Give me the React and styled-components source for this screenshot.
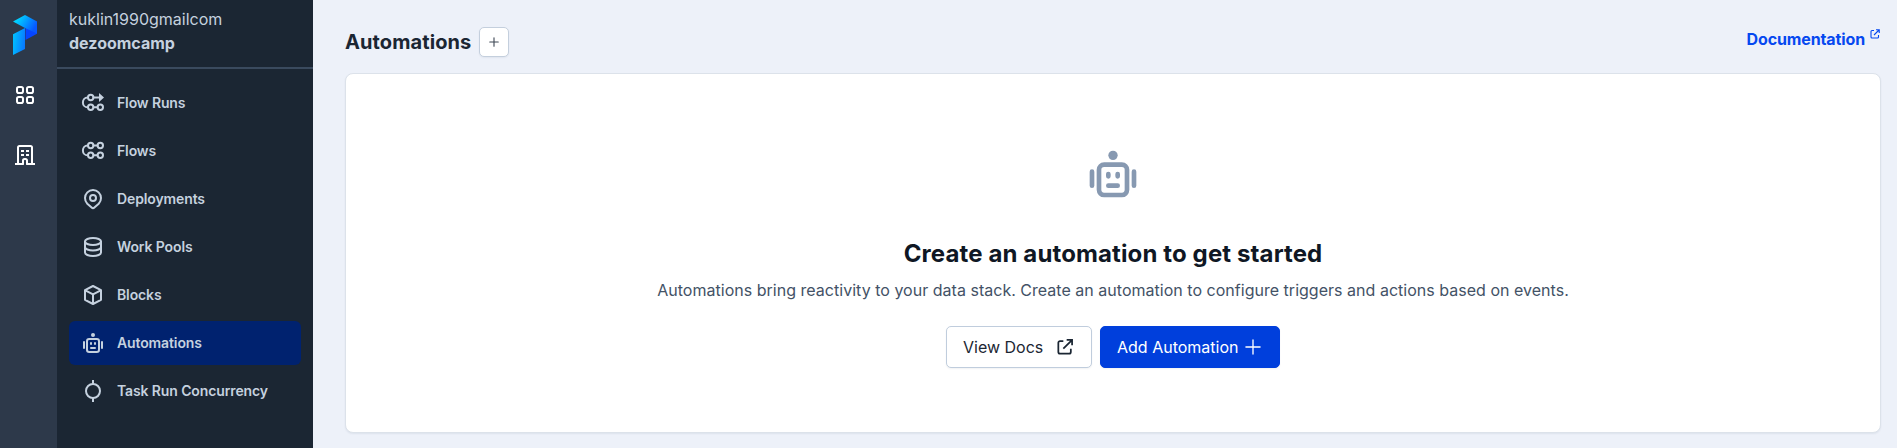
import React from 'react';
import styled, { createGlobalStyle } from 'styled-components';

const GlobalStyle = createGlobalStyle`
  *, *::before, *::after { box-sizing: border-box; }
  body { margin: 0; font-family: Inter, "Liberation Sans", sans-serif; background: #edf1f9; }
  a { color: inherit; text-decoration: none; }
  button { font: inherit; cursor: pointer; }
`;

const Page = styled.div`
  display: flex;
  height: 448px;
  overflow: hidden;
`;

const Rail = styled.aside`
  width: 57px;
  flex: none;
  padding: 15px 0 0 13px;
  background: #2d394a;
  color: #fff;
  display: flex;
  flex-direction: column;
`;

const RailLink = styled.a`
  display: block;
  height: 24px;
  margin-top: ${(p) => p.$gap}px;
`;

const Sidebar = styled.aside`
  width: 256px;
  flex: none;
  background: #1b2633;
  color: #c5d1df;
`;

const Account = styled.header`
  height: 69px;
  padding: 7px 12px 0;
  border-bottom: 2px solid #3a4a5e;
  font-size: 16px;
  line-height: 24px;
`;

const Handle = styled.div`
  font-weight: ${(p) => (p.$strong ? 700 : 400)};
`;

const Nav = styled.nav`
  display: flex;
  flex-direction: column;
  gap: 4px;
  padding: 12px;
`;

const NavItem = styled.a`
  display: flex;
  align-items: center;
  gap: 12px;
  height: 44px;
  padding: 0 12px;
  border-radius: 6px;
  background: ${(p) => (p.$active ? '#00226f' : 'transparent')};
  font-size: 14px;
  font-weight: 600;
  letter-spacing: -0.12px;
`;

const NavLabel = styled.span`
  padding-bottom: 2px;
`;

const Main = styled.main`
  flex: 1;
  min-width: 0;
  padding: 27px 16px 0 32px;
  display: flex;
  flex-direction: column;
`;

const TopBar = styled.header`
  display: flex;
  align-items: flex-start;
  justify-content: space-between;
  height: 46px;
`;

const TitleGroup = styled.div`
  display: flex;
  align-items: center;
  gap: 8px;
`;

const Title = styled.h1`
  margin: 0;
  color: #1b2633;
  font-size: 20px;
  line-height: 28px;
  font-weight: 700;
  letter-spacing: 0.1px;
`;

const AddButton = styled.button`
  width: 30px;
  height: 30px;
  padding: 0;
  display: grid;
  place-items: center;
  border: 1px solid #c4cfdd;
  border-radius: 5px;
  background: #fff;
  color: #3c4653;
  box-shadow: 0 1px 2px rgba(20, 40, 70, 0.06);
`;

const DocLink = styled.a`
  display: flex;
  align-items: flex-start;
  gap: 4px;
  color: #0548f0;
  font-size: 16px;
  line-height: 24px;
  font-weight: 700;
  letter-spacing: -0.12px;
  svg { margin-top: 1px; }
`;

const Card = styled.section`
  height: 360px;
  border: 1px solid #dce2ea;
  border-radius: 8px;
  background: #fff;
  box-shadow: 0 1px 2px rgba(20, 40, 70, 0.07);
  display: flex;
  flex-direction: column;
  align-items: center;
  padding-top: 72px;
`;

const Emblem = styled.div`
  color: #8799b1;
`;

const Headline = styled.h2`
  margin: 36px 0 0;
  color: #0f1724;
  font-size: 24px;
  line-height: 32px;
  font-weight: 700;
  letter-spacing: 0.12px;
`;

const Description = styled.p`
  margin: 8px 0 0;
  color: #435266;
  font-size: 16px;
  line-height: 24px;
  letter-spacing: 0.02px;
`;

const Actions = styled.div`
  display: flex;
  gap: 8px;
  margin-top: 24px;
`;

const ActionButton = styled.button`
  display: flex;
  align-items: center;
  gap: ${(p) => (p.$primary ? 5 : 12)}px;
  width: ${(p) => (p.$primary ? 180 : 146)}px;
  height: 42px;
  padding: 0 16px;
  white-space: nowrap;
  border: 1px solid ${(p) => (p.$primary ? '#003fdc' : '#c0cddd')};
  border-radius: 5px;
  background: ${(p) => (p.$primary ? '#003fdc' : '#fff')};
  color: ${(p) => (p.$primary ? '#fff' : '#1b2633')};
  font-size: 16px;
  box-shadow: 0 1px 2px rgba(20, 40, 70, 0.06);
  svg { flex: none; }
`;

const Glyph = styled.svg`
  display: block;
  flex: none;
`;

const Icon = ({ size = 24, width = 2, children }) => (
  <Glyph width={size} height={size} viewBox="0 0 24 24" fill="none" stroke="currentColor"
    strokeWidth={width} strokeLinecap="round" strokeLinejoin="round">
    {children}
  </Glyph>
);

const FlowBase = () => (
  <>
    <path d="M7 6.5h-.5a4.6 4.9 0 0 0 0 9.8H7M12.5 16.3h4" />
    <circle cx="9.7" cy="6.5" r="2.7" />
    <circle cx="9.7" cy="16.3" r="2.7" />
    <circle cx="19.3" cy="16.3" r="2.7" />
  </>
);

const FlowRunsIcon = () => (
  <Icon>
    <FlowBase />
    <path d="M12.5 6.5H19" />
    <path d="M18 2v9l5-4.5z" fill="currentColor" stroke="none" />
  </Icon>
);

const FlowsIcon = () => (
  <Icon>
    <FlowBase />
    <path d="M12.5 6.5h4" />
    <circle cx="19.3" cy="6.5" r="2.7" />
  </Icon>
);

const DeploymentsIcon = () => (
  <Icon>
    <path d="M17.7 16.7 13.4 20.5a2 2 0 0 1-2.8 0L6.3 16.7A8 8 0 1 1 17.7 16.7z" />
    <circle cx="12" cy="11" r="3" />
  </Icon>
);

const WorkPoolsIcon = () => (
  <Icon>
    <ellipse cx="12" cy="6.5" rx="8" ry="3.5" />
    <path d="M4 6.5v11C4 19.4 7.6 21 12 21s8-1.6 8-3.5v-11M4 12c0 1.9 3.6 3.5 8 3.5s8-1.6 8-3.5" />
  </Icon>
);

const BlocksIcon = () => (
  <Icon>
    <path d="M12 3l8 4.2v9.6L12 21l-8-4.2V7.2zM4.3 7.4 12 11.4l7.7-4M12 11.4V21" />
  </Icon>
);

const RobotIcon = ({ size }) => (
  <Icon size={size}>
    <rect x="6" y="8" width="12" height="13" rx="2.2" />
    <path d="M3 11v6M21 11v6M10 12v1M14 12v1M10 17h4" />
    <circle cx="12" cy="4" r="2" fill="currentColor" stroke="none" />
  </Icon>
);

const ConcurrencyIcon = () => (
  <Icon>
    <circle cx="12" cy="12" r="7" />
    <path d="M12 1v4M12 19v4" strokeLinecap="butt" />
  </Icon>
);

const WorkspacesIcon = () => (
  <Icon>
    <rect x="4" y="4" width="6" height="6" rx="1.8" />
    <rect x="14" y="4" width="6" height="6" rx="1.8" />
    <rect x="4" y="14" width="6" height="6" rx="1.8" />
    <rect x="14" y="14" width="6" height="6" rx="1.8" />
  </Icon>
);

const BuildingIcon = () => (
  <Icon>
    <path d="M5 21V4.5A1.5 1.5 0 0 1 6.5 3h11A1.5 1.5 0 0 1 19 4.5V21M10 21v-3.5a1.5 1.5 0 0 1 1.5-1.5h1a1.5 1.5 0 0 1 1.5 1.5V21" />
    <path d="M2 21h8.5M13.5 21H22M8 8h3M13 8h3M8 12h3M13 12h3" strokeLinecap="butt" />
  </Icon>
);

const ExternalIcon = ({ size, width = 2 }) => (
  <Icon size={size} width={width}>
    <path d="M10 5H6a2 2 0 0 0-2 2v11a2 2 0 0 0 2 2h11a2 2 0 0 0 2-2v-4M14 3.5h6.5V10M20 4 10 14" strokeLinecap="butt" strokeLinejoin="miter" />
  </Icon>
);

const PlusIcon = ({ size, width }) => (
  <Icon size={size} width={width}><path d="M12 3.5v17M3.5 12h17" /></Icon>
);

const Logo = () => (
  <Glyph width="24" height="40" viewBox="0 0 24 40">
    <defs>
      <linearGradient id="fold" x1="0" y1="0" x2="1" y2="0.5">
        <stop offset="0.25" stopColor="#00d0ff" /><stop offset="1" stopColor="#0758ff" />
      </linearGradient>
      <linearGradient id="stem" x1="0" y1="0.3" x2="1" y2="0.6">
        <stop stopColor="#00c0ff" /><stop offset="1" stopColor="#0878ff" />
      </linearGradient>
    </defs>
    <path d="M12.5 12.5 24 6.5v12.2L12.5 25z" fill="#0645ff" />
    <path d="M0 6.5 12 0l12 6.5v12L12 13z" fill="url(#fold)" />
    <path d="M0 19.2 12 13v21L0 40z" fill="url(#stem)" />
  </Glyph>
);

const navItems = [
  ['Flow Runs', FlowRunsIcon],
  ['Flows', FlowsIcon],
  ['Deployments', DeploymentsIcon],
  ['Work Pools', WorkPoolsIcon],
  ['Blocks', BlocksIcon],
  ['Automations', RobotIcon],
  ['Task Run Concurrency', ConcurrencyIcon],
];

export default function App() {
  return (
    <Page>
      <GlobalStyle />
      <Rail>
        <Logo />
        <RailLink $gap={28}><WorkspacesIcon /></RailLink>
        <RailLink $gap={36}><BuildingIcon /></RailLink>
      </Rail>
      <Sidebar>
        <Account>
          <Handle>kuklin1990gmailcom</Handle>
          <Handle $strong>dezoomcamp</Handle>
        </Account>
        <Nav>
          {navItems.map(([label, ItemIcon]) => (
            <NavItem key={label} $active={label === 'Automations'}>
              <ItemIcon />
              <NavLabel>{label}</NavLabel>
            </NavItem>
          ))}
        </Nav>
      </Sidebar>
      <Main>
        <TopBar>
          <TitleGroup>
            <Title>Automations</Title>
            <AddButton aria-label="Add automation"><PlusIcon size={12} width={2.2} /></AddButton>
          </TitleGroup>
          <DocLink>Documentation<ExternalIcon size={12} width={2.2} /></DocLink>
        </TopBar>
        <Card>
          <Emblem><RobotIcon size={56} /></Emblem>
          <Headline>Create an automation to get started</Headline>
          <Description>
            Automations bring reactivity to your data stack. Create an automation to configure triggers and actions based on events.
          </Description>
          <Actions>
            <ActionButton>View Docs<ExternalIcon size={20} width={2.1} /></ActionButton>
            <ActionButton $primary>Add Automation<PlusIcon size={20} width={1.6} /></ActionButton>
          </Actions>
        </Card>
      </Main>
    </Page>
  );
}
